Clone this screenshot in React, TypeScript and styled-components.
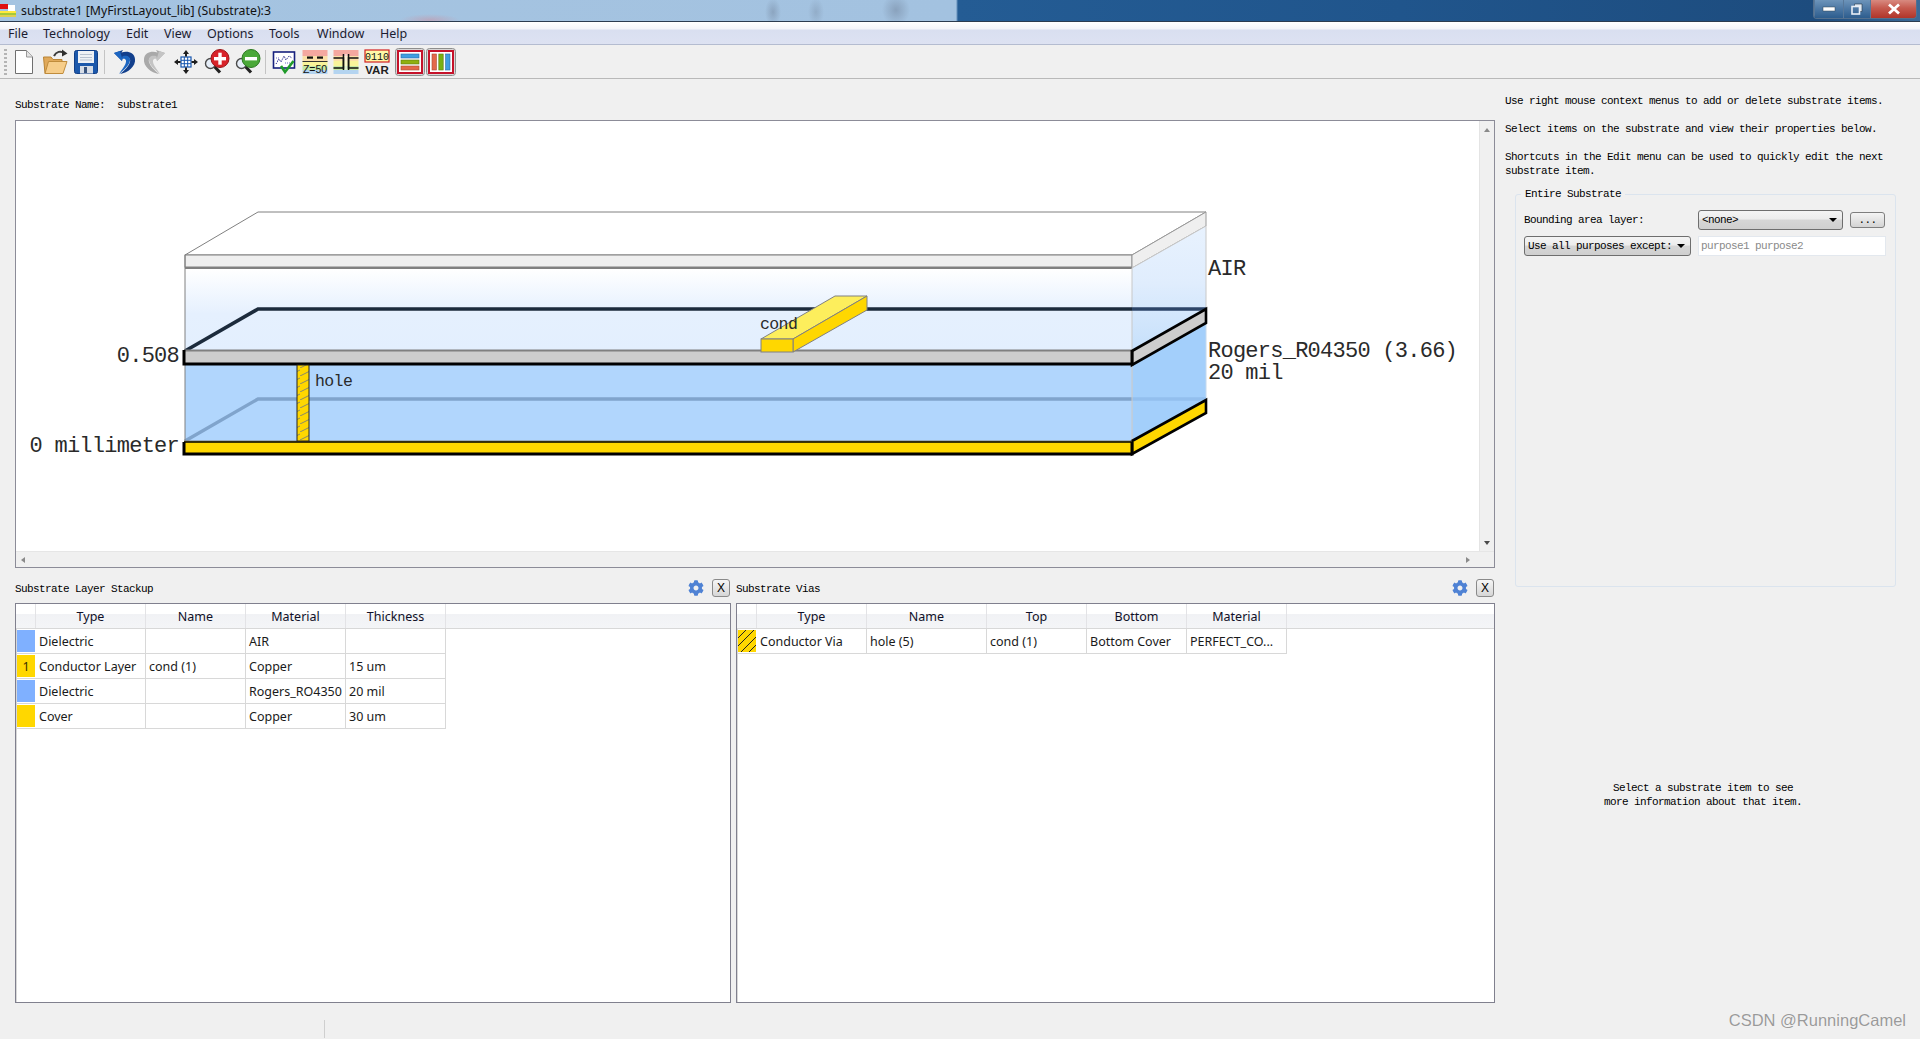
import React from "react";
import styled, { createGlobalStyle } from "styled-components";
import { FaCog } from "react-icons/fa";

const Global = createGlobalStyle`
  html, body { margin: 0; padding: 0; height: 100%; background: #f0f0f0; overflow: hidden; }
  #root { height: 100%; }
`;

const UI = `"Noto Sans", "Liberation Sans", sans-serif`;
const BITMAP = `"Liberation Mono", monospace`;

const Window = styled.div`
  position: relative;
  width: 1920px;
  height: 1039px;
  display: flex;
  flex-direction: column;
  overflow: hidden;
  background: #f0f0f0;
  color: #000;
`;

const TitleBar = styled.div`
  height: 21px;
  flex: none;
  display: flex;
  border-bottom: 1px solid #2c3c50;
  background:
    radial-gradient(ellipse 8px 14px at 773px 12px, rgba(120, 140, 165, 0.55), transparent),
    radial-gradient(ellipse 8px 14px at 816px 12px, rgba(120, 140, 165, 0.4), transparent),
    radial-gradient(ellipse 14px 16px at 896px 10px, rgba(120, 140, 165, 0.6), transparent),
    radial-gradient(ellipse 30px 6px at 430px 20px, rgba(220, 120, 130, 0.35), transparent),
    linear-gradient(90deg, #a5c4e1 0, #a3c2e0 956px, #245c94 958px, #20558c 1400px, #1d4c7e 1814px, #3a6a98 1920px);
`;
const TitleLeft = styled.div`
  display: flex;
  align-items: center;
  gap: 5px;
  flex: 1;
  font: 12.3px ${UI};
  color: #111;
  white-space: nowrap;
`;
const WinButtons = styled.div`
  display: flex;
  height: 18px;
  margin-right: 3px;
  border: 1px solid #54708e;
  border-top: none;
  border-radius: 0 0 4px 4px;
  overflow: hidden;
`;
const WinButton = styled.div<{ $w: number; $close?: boolean }>`
  width: ${(p) => p.$w}px;
  box-sizing: border-box;
  display: flex;
  align-items: center;
  justify-content: center;
  border-left: 1px solid #58789a;
  background: ${(p) =>
    p.$close
      ? "linear-gradient(#d88a80 0, #c65a4e 45%, #b0352a 100%)"
      : "linear-gradient(#6d94ba 0, #4f7aa6 45%, #2d5d8e 100%)"};
`;

const MenuBar = styled.div`
  height: 22px;
  flex: none;
  display: flex;
  align-items: center;
  padding-left: 8px;
  border-bottom: 1px solid #b4bcd0;
  background: linear-gradient(#ffffff 0, #f4f5fa 7px, #d9dff0 8px, #dde2f2 100%);
  font: 12.5px ${UI};
  color: #1c1c30;
`;
const MenuItem = styled.span<{ $w: number }>`
  width: ${(p) => p.$w}px;
`;

const Toolbar = styled.div`
  height: 33px;
  flex: none;
  display: flex;
  align-items: center;
  padding-left: 4px;
  border-bottom: 1px solid #b9b9b9;
  background: #f0f0f0;
`;
const Grip = styled.div`
  width: 3px;
  height: 26px;
  margin-right: 1px;
  background: repeating-linear-gradient(#b4b4b4 0 2px, transparent 2px 4px);
`;
const ToolSep = styled.div<{ $m: number }>`
  width: 1px;
  height: 24px;
  margin: 0 ${(p) => p.$m}px;
  background: #c4c4c4;
`;
const ToolSlot = styled.div`
  width: 31px;
  height: 26px;
  flex: none;
  display: flex;
  justify-content: center;
  svg { display: block; }
`;
const ToggleSlot = styled(ToolSlot)<{ $ml?: number }>`
  height: 28px;
  margin-left: ${(p) => p.$ml ?? 0}px;
`;

const Content = styled.div`
  flex: 1;
  display: flex;
  min-height: 0;
`;
const LeftColumn = styled.div`
  width: 1480px;
  margin-left: 15px;
  flex: none;
  display: flex;
  flex-direction: column;
`;
const Small = styled.div`
  font: 11px/14px ${BITMAP};
  letter-spacing: -0.6px;
  white-space: pre;
`;
const NameLabel = styled(Small)`
  height: 41px;
  padding-top: 19px;
  box-sizing: border-box;
`;

const CanvasFrame = styled.div`
  height: 448px;
  flex: none;
  box-sizing: border-box;
  display: flex;
  flex-direction: column;
  border: 1px solid #8c8c98;
  background: #fff;
`;
const CanvasRow = styled.div`
  flex: 1;
  display: flex;
  min-height: 0;
`;
const CanvasView = styled.div`
  flex: 1;
  min-width: 0;
  svg { display: block; }
`;
const VScroll = styled.div`
  width: 15px;
  flex: none;
  display: flex;
  flex-direction: column;
  justify-content: space-between;
  align-items: center;
  padding: 7px 0 6px;
  box-sizing: border-box;
  background: #f0f0f0;
  border-left: 1px solid #e4e4e4;
`;
const HScroll = styled.div`
  height: 15px;
  flex: none;
  display: flex;
  justify-content: space-between;
  align-items: center;
  padding: 0 24px 0 5px;
  background: #f0f0f0;
  border-top: 1px solid #e6e6e6;
`;
const Arrow = styled.i<{ $d: "up" | "down" | "left" | "right" }>`
  width: 0;
  height: 0;
  display: block;
  border: 3px solid transparent;
  ${(p) =>
    p.$d === "up"
      ? "border-bottom: 4px solid #8a8a8a; border-top: none;"
      : p.$d === "down"
      ? "border-top: 4px solid #4a4a4a; border-bottom: none;"
      : p.$d === "left"
      ? "border-right: 4px solid #8a8a8a; border-left: none;"
      : "border-left: 4px solid #8a8a8a; border-right: none;"}
`;

const PanelRow = styled.div`
  display: flex;
  gap: 5px;
`;
const Panel = styled.div<{ $w: number }>`
  width: ${(p) => p.$w}px;
  flex: none;
  display: flex;
  flex-direction: column;
`;
const PanelHead = styled.div`
  height: 30px;
  margin-top: 5px;
  display: flex;
  align-items: center;
  padding-right: 1px;
`;
const PanelTitle = styled(Small)`
  flex: 1;
  padding-top: 1px;
`;
const GearIcon = styled(FaCog)`
  color: #4f82d4;
  font-size: 16px;
  margin-right: 8px;
`;
const CloseBox = styled.div`
  width: 18px;
  height: 18px;
  box-sizing: border-box;
  display: flex;
  align-items: center;
  justify-content: center;
  border: 1px solid #8a8a8a;
  border-radius: 3px;
  background: linear-gradient(#f6f6f6, #d6d6d6);
  font: 12px "Liberation Sans", sans-serif;
`;
const TableFrame = styled.div`
  height: 400px;
  box-sizing: border-box;
  border: 1px solid #80808e;
  box-shadow: inset 1px 0 0 #d8d8d8;
  background: #fff;
  font: 12.5px ${UI};
  color: #1a1a1a;
`;
const HeaderRow = styled.div`
  display: flex;
  height: 25px;
  box-sizing: border-box;
  border-bottom: 1px solid #d8d8d8;
  background: linear-gradient(#ffffff 0, #ffffff 40%, #f1f2f5 42%, #f4f5f7 100%);
`;
const HeaderCell = styled.div<{ $w: number }>`
  width: ${(p) => p.$w}px;
  box-sizing: border-box;
  flex: none;
  display: flex;
  align-items: center;
  justify-content: center;
  border-right: 1px solid #e3e3e6;
  color: #101028;
`;
const BodyRow = styled.div`
  display: flex;
  width: fit-content;
  height: 25px;
  box-sizing: border-box;
  border-bottom: 1px solid #d8d8d8;
`;
const Cell = styled.div<{ $w: number }>`
  width: ${(p) => p.$w}px;
  box-sizing: border-box;
  flex: none;
  display: flex;
  align-items: center;
  padding-left: 3px;
  border-right: 1px solid #d8d8d8;
  white-space: nowrap;
  overflow: hidden;
`;
const Swatch = styled.div<{ $w: number; $fill: string }>`
  width: ${(p) => p.$w}px;
  flex: none;
  box-sizing: border-box;
  margin: 1px;
  display: flex;
  align-items: center;
  justify-content: center;
  background: ${(p) => p.$fill};
  color: #3a3000;
`;

const RightColumn = styled.div`
  width: 396px;
  margin-left: 10px;
  flex: none;
  padding-top: 15px;
  display: flex;
  flex-direction: column;
`;
const HelpLine = styled(Small)`
  margin-bottom: 14px;
  white-space: pre-wrap;
`;
const GroupBox = styled.fieldset`
  margin: -5px 0 0 10px;
  padding: 9px 8px 0 8px;
  width: 381px;
  height: 400px;
  box-sizing: border-box;
  border: 1px solid #dbe4ee;
  border-radius: 3px;
  font: 11px/14px ${BITMAP};
  letter-spacing: -0.6px;
  min-inline-size: 0;
`;
const GroupLegend = styled.legend`
  padding: 0 4px;
  margin-left: -3px;
  white-space: pre;
`;
const FormRow = styled.div`
  display: flex;
  align-items: center;
  height: 20px;
  margin-bottom: 6px;
`;
const FieldLabel = styled.div`
  width: 174px;
  flex: none;
`;
const Combo = styled.div<{ $w: number }>`
  width: ${(p) => p.$w}px;
  height: 20px;
  flex: none;
  box-sizing: border-box;
  display: flex;
  align-items: center;
  justify-content: space-between;
  padding: 0 5px 0 3px;
  border: 1px solid #6e6e6e;
  border-radius: 3px;
  background: linear-gradient(#f4f4f4 0, #ececec 45%, #d6d6d6 50%, #cfcfcf 100%);
`;
const ComboArrow = styled.i`
  width: 0;
  height: 0;
  border-left: 4px solid transparent;
  border-right: 4px solid transparent;
  border-top: 4px solid #000;
`;
const DotsButton = styled.div`
  width: 35px;
  height: 16px;
  margin-left: 7px;
  flex: none;
  box-sizing: border-box;
  display: flex;
  align-items: center;
  justify-content: center;
  border: 1px solid #7e7e7e;
  border-radius: 3px;
  background: linear-gradient(#f4f4f4, #d4d4d4);
`;
const PurposeInput = styled.div`
  width: 188px;
  height: 20px;
  margin-left: 7px;
  flex: none;
  box-sizing: border-box;
  padding-left: 2px;
  display: flex;
  align-items: center;
  border: 1px solid #e3e8ee;
  background: #fff;
  color: #8a8a8a;
`;
const CenterNote = styled(Small)`
  margin-top: 194px;
  text-align: center;
`;

const StatusArea = styled.div`
  position: absolute;
  left: 324px;
  bottom: 1px;
  width: 1px;
  height: 18px;
  background: #cfcfcf;
`;
const Watermark = styled.div`
  position: absolute;
  right: 14px;
  bottom: 9px;
  font: 16.5px "Liberation Sans", sans-serif;
  color: #9a9a9a;
  text-shadow: 0 0 1px #fff;
`;

const Svg26: React.FC<{ children: React.ReactNode; w?: number; h?: number }> = ({ children, w = 26, h = 26 }) => (
  <svg width={w} height={h} viewBox={`0 0 ${w} ${h}`}>
    {children}
  </svg>
);

const IconNew = () => (
  <Svg26>
    <path d="M4.5 1.5H15.5L21.5 8V24.5H4.5Z" fill="#fff" stroke="#6f6f6f" />
    <path d="M15.5 1.5V8H21.5" fill="#e4e4e4" stroke="#9a9a9a" />
  </Svg26>
);
const IconOpen = () => (
  <Svg26>
    <path d="M1.5 8H9L11 10.5H20V24.5H3Z" fill="#e0a95a" stroke="#b98434" />
    <path d="M3 24.5L6.5 12.5H25L21 24.5Z" fill="#f6cd8a" stroke="#c08c3c" />
    <path d="M12 7C14 2.5 19 1.5 22 4" fill="none" stroke="#3c3c3c" strokeWidth="2" />
    <path d="M20 0.5L25.5 4.5L20 7.5Z" fill="#2e2e2e" />
  </Svg26>
);
const IconSave = () => (
  <Svg26>
    <rect x="1.5" y="1.5" width="23" height="23" rx="2" fill="#1c58ab" stroke="#123f86" />
    <rect x="5" y="2" width="16" height="12" fill="#eef1f5" />
    <path d="M7 5.5H19M7 8.5H19M7 11H19" stroke="#b8c2d0" />
    <rect x="7" y="17" width="13" height="7.5" fill="#d7dde6" />
    <rect x="11" y="18" width="3" height="6" fill="#39547e" />
  </Svg26>
);
const IconUndo = ({ c = "#1c66c2", d = "#123f8c" }: { c?: string; d?: string }) => (
  <Svg26>
    <path d="M3 4L11 12L12 8C17 7 20 9 19 13C18 17 14 21 9 25C17 24 25 17 24 10C23.5 4 17 1.5 10.5 3.5L12 1Z" fill={d} />
    <path d="M3 4L11 12L11.5 7.2C16 5.8 19.5 7.5 19 11.5C18.5 16 13 21 8 25C12 19 15.5 15 15 11.5C14.6 9.8 13 9.4 11.3 10L9 2Z" fill={c} />
  </Svg26>
);
const IconRedo = () => (
  <Svg26>
    <g transform="translate(26 0) scale(-1 1)">
      <path d="M3 4L11 12L12 8C17 7 20 9 19 13C18 17 14 21 9 25C17 24 25 17 24 10C23.5 4 17 1.5 10.5 3.5L12 1Z" fill="#a9a9a9" />
      <path d="M3 4L11 12L11.5 7.2C16 5.8 19.5 7.5 19 11.5C18.5 16 13 21 8 25C12 19 15.5 15 15 11.5C14.6 9.8 13 9.4 11.3 10L9 2Z" fill="#c4c4c4" />
    </g>
  </Svg26>
);
const IconPan = () => (
  <Svg26>
    <rect x="8" y="8" width="10" height="10" fill="#fff" stroke="#1455b0" strokeWidth="1.2" />
    <path d="M11.3 8V18M14.7 8V18M8 11.3H18M8 14.7H18" stroke="#1455b0" />
    <path d="M13 1L16 5H14V7.5H12V5H10ZM13 25L10 21H12V18.5H14V21H16ZM1 13L5 10V12H7.5V14H5V16ZM25 13L21 16V14H18.5V12H21V10Z" fill="#1d1d1d" />
  </Svg26>
);
const Zoom: React.FC<{ c: string; d: string; plus?: boolean }> = ({ c, d, plus }) => (
  <Svg26>
    <path d="M9 16L16 23.5" stroke="#222" strokeWidth="3.2" />
    <circle cx="6.5" cy="14.5" r="5" fill="#e6eef8" stroke="#4a4a4a" strokeWidth="1.4" />
    <circle cx="16" cy="9.5" r="9" fill={c} stroke={d} />
    <rect x="10" y="8" width="12" height="3.4" fill="#fff" />
    {plus && <rect x="14.3" y="3.7" width="3.4" height="12" fill="#fff" />}
  </Svg26>
);
const IconCheck = () => (
  <Svg26>
    <rect x="2.5" y="3" width="21" height="16" fill="#fff" stroke="#16207e" strokeWidth="1.6" />
    <path d="M5 15L8 10L10 13L13 7L15 11L18 7L21 9" fill="none" stroke="#2a2a8e" strokeDasharray="1.4 1" />
    <path d="M5 9H9M14 14H20M6 12H8" stroke="#6a6ac0" strokeDasharray="1 1" />
    <path d="M10 17L14 23L22.5 12" fill="none" stroke="#1f9a2a" strokeWidth="2.6" />
  </Svg26>
);
const Bands = () => (
  <>
    <rect x="0.5" y="1" width="25" height="6" fill="#f4a8a0" />
    <rect x="0.5" y="7" width="25" height="5" fill="#fbe0a8" />
    <rect x="0.5" y="12" width="25" height="5" fill="#f8f39a" />
    <rect x="0.5" y="17" width="25" height="4" fill="#c6e8a4" />
    <rect x="0.5" y="21" width="25" height="4" fill="#b4d4f0" />
  </>
);
const IconZ50 = () => (
  <Svg26>
    <Bands />
    <rect x="5" y="7.5" width="6" height="2.2" fill="#111" />
    <rect x="15" y="7.5" width="6" height="2.2" fill="#111" />
    <rect x="0.5" y="12" width="25" height="1" fill="#333" />
    <text x="13" y="23.5" textAnchor="middle" fontFamily="Liberation Sans, sans-serif" fontSize="10.5" fill="#111">Z=50</text>
  </Svg26>
);
const IconGap = () => (
  <Svg26>
    <Bands />
    <path d="M0.5 9H10.5V19H0.5M25.5 9H15.5V19H25.5" fill="none" stroke="#111" strokeWidth="1.6" />
    <path d="M10.5 5V21M15.5 5V21" stroke="#111" strokeWidth="1.6" />
    <rect x="11.5" y="5" width="3" height="16" fill="#fff" opacity=".5" />
  </Svg26>
);
const IconVar = () => (
  <Svg26>
    <rect x="1" y="1" width="24" height="12" fill="#fff8a8" stroke="#d32020" strokeWidth="1.2" />
    <text x="13" y="10.5" textAnchor="middle" fontFamily="Liberation Mono, monospace" fontSize="10" fill="#111">0110</text>
    <text x="13" y="24.5" textAnchor="middle" fontFamily="Liberation Sans, sans-serif" fontSize="11.5" fontWeight="700" fill="#222">VAR</text>
  </Svg26>
);
const ToggleShell: React.FC<{ children: React.ReactNode }> = ({ children }) => (
  <Svg26 w={30} h={28}>
    <rect x="0.5" y="0.5" width="29" height="27" rx="3" fill="#d8d8d8" stroke="#8e8e8e" />
    <rect x="3" y="3" width="24" height="22" fill="#fff" stroke="#c5122a" strokeWidth="2" />
    {children}
  </Svg26>
);
const IconRows = () => (
  <ToggleShell>
    <rect x="6" y="6" width="18" height="4" fill="#3f9ee0" stroke="#2a6aa0" strokeWidth=".6" />
    <rect x="6" y="12" width="18" height="4" fill="#8fb010" stroke="#5f7a10" strokeWidth=".6" />
    <rect x="6" y="18" width="18" height="4" fill="#e4684a" stroke="#a64a30" strokeWidth=".6" />
  </ToggleShell>
);
const IconCols = () => (
  <ToggleShell>
    <rect x="6" y="6" width="4.4" height="16" fill="#e4684a" stroke="#a64a30" strokeWidth=".6" />
    <rect x="12.8" y="6" width="4.4" height="16" fill="#78b010" stroke="#5f7a10" strokeWidth=".6" />
    <rect x="19.6" y="6" width="4.4" height="16" fill="#3f9ee0" stroke="#2a6aa0" strokeWidth=".6" />
  </ToggleShell>
);

const AppGlyph = () => (
  <svg width="16" height="14" viewBox="0 0 16 14">
    <rect x="0" y="7" width="16" height="2" fill="#ffe93c" />
    <rect x="0" y="9" width="16" height="2" fill="#a6c93a" />
    <rect x="0" y="11" width="16" height="2" fill="#e0d050" />
    <rect x="0" y="0" width="8" height="5" fill="#e01010" />
    <rect x="8" y="1" width="7" height="6" fill="#fff" />
  </svg>
);

const DiagramText = styled.text<{ $s: number; $ls: number }>`
  font-family: ${BITMAP};
  font-size: ${(p) => p.$s}px;
  letter-spacing: ${(p) => p.$ls}px;
  fill: #2a2a2a;
`;
const Big: React.FC<{ x: number; y: number; end?: boolean; children: string }> = ({ x, y, end, children }) => (
  <DiagramText x={x} y={y} $s={22} $ls={-0.75} textAnchor={end ? "end" : "start"} xmlSpace="preserve">{children}</DiagramText>
);
const Mid: React.FC<{ x: number; y: number; children: string }> = ({ x, y, children }) => (
  <DiagramText x={x} y={y} $s={16.5} $ls={-0.6}>{children}</DiagramText>
);

const Diagram = () => (
  <svg width="1463" height="431" viewBox="16 121 1463 431">
    <defs>
      <linearGradient id="airFront" x1="0" y1="0" x2="0" y2="1">
        <stop offset="0" stopColor="#ffffff" />
        <stop offset=".55" stopColor="#e5f0fe" />
        <stop offset="1" stopColor="#e3effe" />
      </linearGradient>
      <linearGradient id="airSide" x1="0" y1="0" x2="0" y2="1">
        <stop offset="0" stopColor="#e8f2fe" />
        <stop offset=".45" stopColor="#e0edfd" />
        <stop offset="1" stopColor="#c6e0fb" />
      </linearGradient>
      <pattern id="holeHatch" width="12" height="8" patternUnits="userSpaceOnUse">
        <rect width="12" height="8" fill="#ffd700" />
        <path d="M0 8L12 2" stroke="#8a8a6a" strokeWidth="1" />
      </pattern>
    </defs>

    <polygon points="185,255 258,212 1206,212 1132,255" fill="#fff" stroke="#808080" />
    <rect x="185" y="255" width="947" height="12" fill="#efefef" stroke="#808080" />
    <rect x="185" y="267" width="947" height="2" fill="#808080" />
    <rect x="185" y="269" width="947" height="82" fill="url(#airFront)" />
    <line x1="185" y1="255" x2="185" y2="351" stroke="#808080" />

    <polygon points="1132,255 1206,212 1206,226 1132,268" fill="#efefef" stroke="#9a9a9a" />
    <polygon points="1132,268 1206,226 1206,309 1132,351" fill="url(#airSide)" stroke="#c8c8c8" />

    <path d="M185 351L258 309H1132" fill="none" stroke="#1c2b3c" strokeWidth="3.6" />
    <line x1="1132" y1="309" x2="1206" y2="309" stroke="#2d4568" strokeWidth="3.6" />

    <polygon points="1132,365 1206,323 1206,399 1132,441" fill="#a3cffb" stroke="#c4d8ec" />
    <rect x="185" y="365" width="947" height="76" fill="#b1d6fd" />
    <path d="M185 441L258 399H1132" fill="none" stroke="#80a4cc" strokeWidth="3.4" />
    <line x1="1132" y1="399" x2="1206" y2="399" stroke="#93bfee" strokeWidth="3.4" />
    <line x1="185" y1="365" x2="185" y2="441" stroke="#808080" />
    <line x1="1132" y1="365" x2="1132" y2="441" stroke="#c8c8c8" />

    <polygon points="1132,351 1206,309 1206,323 1132,365" fill="#cdcdcd" stroke="#000" strokeWidth="2.6" />
    <rect x="184" y="351" width="948" height="13" fill="#cdcdcd" />
    <line x1="184" y1="350.5" x2="1132" y2="350.5" stroke="#808080" strokeWidth="2" />
    <path d="M184 350V364H1132V350" fill="none" stroke="#000" strokeWidth="3" />

    <polygon points="1132,441 1206,400 1206,413 1132,454" fill="#ffd700" stroke="#000" strokeWidth="2.6" />
    <rect x="184" y="441" width="948" height="13" fill="#ffd700" />
    <line x1="184" y1="441" x2="1132" y2="441" stroke="#808080" />
    <path d="M184 442V454H1132V442" fill="none" stroke="#000" strokeWidth="3" />
    <line x1="184" y1="442" x2="1132" y2="442" stroke="#000" strokeWidth="1.6" />

    <rect x="297" y="365" width="12" height="76" fill="url(#holeHatch)" stroke="#222" strokeWidth="1" />

    <polygon points="761,339 835,296 867,296 793,339" fill="#fdee5c" stroke="#808080" />
    <polygon points="793,339 867,296 867,310 793,352" fill="#ffd700" stroke="#808080" />
    <rect x="761" y="339" width="32" height="13" fill="#ffd700" stroke="#808080" />

    <Big x={1208} y={275}>AIR</Big>
    <Big x={1208} y={357}>Rogers_R04350 (3.66)</Big>
    <Big x={1208} y={379}>20 mil</Big>
    <Big x={179} y={362} end>0.508</Big>
    <Big x={179} y={452} end>0 millimeter</Big>
    <Mid x={315} y={386}>hole</Mid>
    <Mid x={760} y={329}>cond</Mid>
  </svg>
);

type Col = { label: string; w: number };
const LAYER_COLS: Col[] = [
  { label: "", w: 20 },
  { label: "Type", w: 110 },
  { label: "Name", w: 100 },
  { label: "Material", w: 100 },
  { label: "Thickness", w: 100 },
];
const VIA_COLS: Col[] = [
  { label: "", w: 20 },
  { label: "Type", w: 110 },
  { label: "Name", w: 120 },
  { label: "Top", w: 100 },
  { label: "Bottom", w: 100 },
  { label: "Material", w: 100 },
];
const BLUE = "#7fb0ff";
const GOLD = "#ffd700";
const HATCH = `repeating-linear-gradient(135deg, ${GOLD} 0 5px, #222 5px 6px)`;

const LAYERS: { fill: string; mark?: string; cells: string[] }[] = [
  { fill: BLUE, cells: ["Dielectric", "", "AIR", ""] },
  { fill: GOLD, mark: "1", cells: ["Conductor Layer", "cond (1)", "Copper", "15 um"] },
  { fill: BLUE, cells: ["Dielectric", "", "Rogers_RO4350", "20 mil"] },
  { fill: GOLD, cells: ["Cover", "", "Copper", "30 um"] },
];
const VIAS: { fill: string; mark?: string; cells: string[] }[] = [
  { fill: HATCH, cells: ["Conductor Via", "hole (5)", "cond (1)", "Bottom Cover", "PERFECT_CO..."] },
];

const DataTable: React.FC<{ cols: Col[]; rows: { fill: string; mark?: string; cells: string[] }[] }> = ({ cols, rows }) => (
  <TableFrame>
    <HeaderRow>
      {cols.map((c, i) => (
        <HeaderCell key={i} $w={c.w}>{c.label}</HeaderCell>
      ))}
    </HeaderRow>
    {rows.map((r, i) => (
      <BodyRow key={i}>
        <Swatch $w={cols[0].w - 2} $fill={r.fill}>{r.mark}</Swatch>
        {r.cells.map((t, j) => (
          <Cell key={j} $w={cols[j + 1].w}>{t}</Cell>
        ))}
      </BodyRow>
    ))}
  </TableFrame>
);

const PanelHeader: React.FC<{ title: string }> = ({ title }) => (
  <PanelHead>
    <PanelTitle>{title}</PanelTitle>
    <GearIcon />
    <CloseBox>X</CloseBox>
  </PanelHead>
);

const MENU: [string, number][] = [
  ["File", 35], ["Technology", 83], ["Edit", 38], ["View", 43], ["Options", 62], ["Tools", 48], ["Window", 63], ["Help", 40],
];

export default function App() {
  return (
    <>
      <Global />
      <Window>
        <TitleBar>
          <TitleLeft>
            <AppGlyph />
            <span>substrate1 [MyFirstLayout_lib] (Substrate):3</span>
          </TitleLeft>
          <WinButtons>
            <WinButton $w={29}>
              <svg width="14" height="6"><rect x="1" y="1" width="12" height="4" fill="#fff" stroke="#345" strokeWidth=".5" /></svg>
            </WinButton>
            <WinButton $w={27}>
              <svg width="12" height="12" viewBox="0 0 12 12"><path d="M3.5 1H11V8.5H8.5V3.5H3.5Z" fill="#dfe8f2" stroke="#234" strokeWidth=".6" /><rect x="1" y="3.5" width="7.5" height="7.5" fill="none" stroke="#e8eef6" strokeWidth="1.6" /></svg>
            </WinButton>
            <WinButton $w={46} $close>
              <svg width="14" height="12" viewBox="0 0 14 12"><path d="M2 1.5L12 10.5M12 1.5L2 10.5" stroke="#fff" strokeWidth="2.8" /></svg>
            </WinButton>
          </WinButtons>
        </TitleBar>

        <MenuBar>
          {MENU.map(([m, w]) => (
            <MenuItem key={m} $w={w}>{m}</MenuItem>
          ))}
        </MenuBar>

        <Toolbar>
          <Grip />
          <ToolSlot><IconNew /></ToolSlot>
          <ToolSlot><IconOpen /></ToolSlot>
          <ToolSlot><IconSave /></ToolSlot>
          <ToolSep $m={3} />
          <ToolSlot><IconUndo /></ToolSlot>
          <ToolSlot><IconRedo /></ToolSlot>
          <ToolSlot><IconPan /></ToolSlot>
          <ToolSlot><Zoom c="#d8232a" d="#9a1418" plus /></ToolSlot>
          <ToolSlot><Zoom c="#4aa838" d="#2c7a22" /></ToolSlot>
          <ToolSep $m={2} />
          <ToolSlot><IconCheck /></ToolSlot>
          <ToolSlot><IconZ50 /></ToolSlot>
          <ToolSlot><IconGap /></ToolSlot>
          <ToolSlot><IconVar /></ToolSlot>
          <ToggleSlot $ml={2}><IconRows /></ToggleSlot>
          <ToggleSlot><IconCols /></ToggleSlot>
        </Toolbar>

        <Content>
          <LeftColumn>
            <NameLabel>{"Substrate Name:  substrate1"}</NameLabel>
            <CanvasFrame>
              <CanvasRow>
                <CanvasView><Diagram /></CanvasView>
                <VScroll>
                  <Arrow $d="up" />
                  <Arrow $d="down" />
                </VScroll>
              </CanvasRow>
              <HScroll>
                <Arrow $d="left" />
                <Arrow $d="right" />
              </HScroll>
            </CanvasFrame>
            <PanelRow>
              <Panel $w={716}>
                <PanelHeader title="Substrate Layer Stackup" />
                <DataTable cols={LAYER_COLS} rows={LAYERS} />
              </Panel>
              <Panel $w={759}>
                <PanelHeader title="Substrate Vias" />
                <DataTable cols={VIA_COLS} rows={VIAS} />
              </Panel>
            </PanelRow>
          </LeftColumn>

          <RightColumn>
            <HelpLine>Use right mouse context menus to add or delete substrate items.</HelpLine>
            <HelpLine>Select items on the substrate and view their properties below.</HelpLine>
            <HelpLine>{"Shortcuts in the Edit menu can be used to quickly edit the next\nsubstrate item."}</HelpLine>
            <GroupBox>
              <GroupLegend>Entire Substrate</GroupLegend>
              <FormRow>
                <FieldLabel>Bounding area layer:</FieldLabel>
                <Combo $w={145}>
                  <span>{"<none>"}</span>
                  <ComboArrow />
                </Combo>
                <DotsButton>...</DotsButton>
              </FormRow>
              <FormRow>
                <Combo $w={167}>
                  <span>Use all purposes except:</span>
                  <ComboArrow />
                </Combo>
                <PurposeInput>purpose1 purpose2</PurposeInput>
              </FormRow>
            </GroupBox>
            <CenterNote>{"Select a substrate item to see\nmore information about that item."}</CenterNote>
          </RightColumn>
        </Content>

        <StatusArea />
        <Watermark>CSDN @RunningCamel</Watermark>
      </Window>
    </>
  );
}
